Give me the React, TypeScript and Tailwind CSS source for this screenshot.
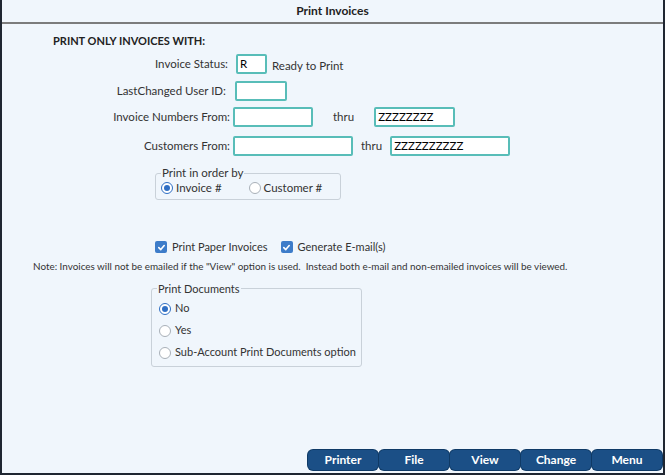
import React from 'react'

const font = { fontFamily: 'Lato, "Noto Sans", Arial, sans-serif' }

function Field({ w, value = '' }: { w: string; value?: string }) {
  return (
    <div className={`${w} h-[20px] bg-white border-2 border-[#58bdb8] rounded-[2px] flex items-center px-[2px] text-[11.5px] text-black`}>
      {value}
    </div>
  )
}

function Radio({ checked }: { checked?: boolean }) {
  return checked ? (
    <span className="w-[12px] h-[12px] shrink-0 rounded-full border-[1.5px] border-[#2f6fc4] bg-white flex items-center justify-center">
      <span className="w-[6px] h-[6px] rounded-full bg-[#2f6fc4]" />
    </span>
  ) : (
    <span className="w-[12px] h-[12px] shrink-0 rounded-full border border-[#a8b0b8] bg-white" />
  )
}

function Check() {
  return (
    <span className="w-[12px] h-[12px] shrink-0 rounded-[2px] bg-[#3d7cc9] flex items-center justify-center">
      <svg width="9" height="9" viewBox="0 0 10 10">
        <path d="M2 5.2 L4.2 7.3 L8 2.8" fill="none" stroke="white" strokeWidth="1.8" strokeLinecap="round" strokeLinejoin="round" />
      </svg>
    </span>
  )
}

function Button({ label }: { label: string }) {
  return (
    <button className="w-[70px] h-[20px] rounded-[5px] bg-[#1b4f86] text-white text-[12px] font-bold flex items-center justify-center shadow-[0_0_0_1px_#0f3a66]">
      {label}
    </button>
  )
}

export default function App() {
  return (
    <div className="w-[665px] h-[475px] bg-[#f0f6fc] border-l-2 border-r-2 border-b-2 border-[#1f2631] flex flex-col text-[#333]" style={font}>
      <div className="h-[24px] border-b-2 border-[#7c7c7c] flex items-center justify-center text-[12px] font-bold text-[#222]">
        Print Invoices
      </div>

      <div className="flex flex-col flex-1">
        <div className="pl-[51px] pt-[9px] text-[11px] font-bold text-[#222] leading-[16px]">PRINT ONLY INVOICES WITH:</div>

        <div className="flex items-center mt-[5px] h-[20px] text-[11.5px]">
          <span className="w-[226px] text-right">Invoice Status:</span>
          <span className="ml-[8px]"><Field w="w-[31px]" value="R" /></span>
          <span className="ml-[5px] mt-[3px]">Ready to Print</span>
        </div>

        <div className="flex items-center mt-[7px] h-[20px] text-[11.5px]">
          <span className="w-[224px] text-right">LastChanged User ID:</span>
          <span className="ml-[9px]"><Field w="w-[52px]" /></span>
        </div>

        <div className="flex items-center mt-[6px] h-[20px] text-[11.5px]">
          <span className="w-[228px] text-right">Invoice Numbers From:</span>
          <span className="ml-[3px]"><Field w="w-[80px]" /></span>
          <span className="ml-[20px]">thru</span>
          <span className="ml-[20px]"><Field w="w-[81px]" value="ZZZZZZZZ" /></span>
        </div>

        <div className="flex items-center mt-[9px] h-[20px] text-[11.5px]">
          <span className="w-[228px] text-right">Customers From:</span>
          <span className="ml-[3px]"><Field w="w-[120px]" /></span>
          <span className="ml-[8px]">thru</span>
          <span className="ml-[8px]"><Field w="w-[120px]" value="ZZZZZZZZZZ" /></span>
        </div>

        <fieldset className="ml-[153px] mt-[11px] w-[186px] min-w-0 h-[33px] border border-[#c9d1d9] rounded-[3px] px-[5px] pb-[3px] flex items-center gap-[27px] text-[11.5px] whitespace-nowrap">
          <legend className="px-[1px] leading-[12px]">Print in order by</legend>
          <label className="flex items-center gap-[3px]"><Radio checked /> Invoice #</label>
          <label className="flex items-center gap-[3px]"><Radio /> Customer #</label>
        </fieldset>

        <div className="flex items-center mt-[39px] pl-[153px] text-[11px]">
          <label className="flex items-center gap-[5px]"><Check /> Print Paper Invoices</label>
          <label className="flex items-center gap-[5px] ml-[13px]"><Check /> Generate E-mail(s)</label>
        </div>

        <div className="mt-[4px] pl-[31px] text-[9.9px] leading-[12px] whitespace-pre">
          {'Note: Invoices will not be emailed if the "View" option is used.  Instead both e-mail and non-emailed invoices will be viewed.'}
        </div>

        <fieldset className="ml-[149px] mt-[11px] w-[211px] min-w-0 border border-[#c9d1d9] rounded-[3px] px-[7px] pt-[8px] pb-[7px] text-[11px] whitespace-nowrap flex flex-col gap-[10px]">
          <legend className="px-[1px] ml-[-2px] leading-[12px]">Print Documents</legend>
          <label className="flex items-center gap-[4px] h-[12px]"><Radio checked /> No</label>
          <label className="flex items-center gap-[4px] h-[12px]"><Radio /> Yes</label>
          <label className="flex items-center gap-[4px] h-[12px]"><Radio /> Sub-Account Print Documents option</label>
        </fieldset>

        <div className="mt-auto mb-[3px] flex justify-end gap-[1px] pr-[1px]">
          <Button label="Printer" />
          <Button label="File" />
          <Button label="View" />
          <Button label="Change" />
          <Button label="Menu" />
        </div>
      </div>
    </div>
  )
}
